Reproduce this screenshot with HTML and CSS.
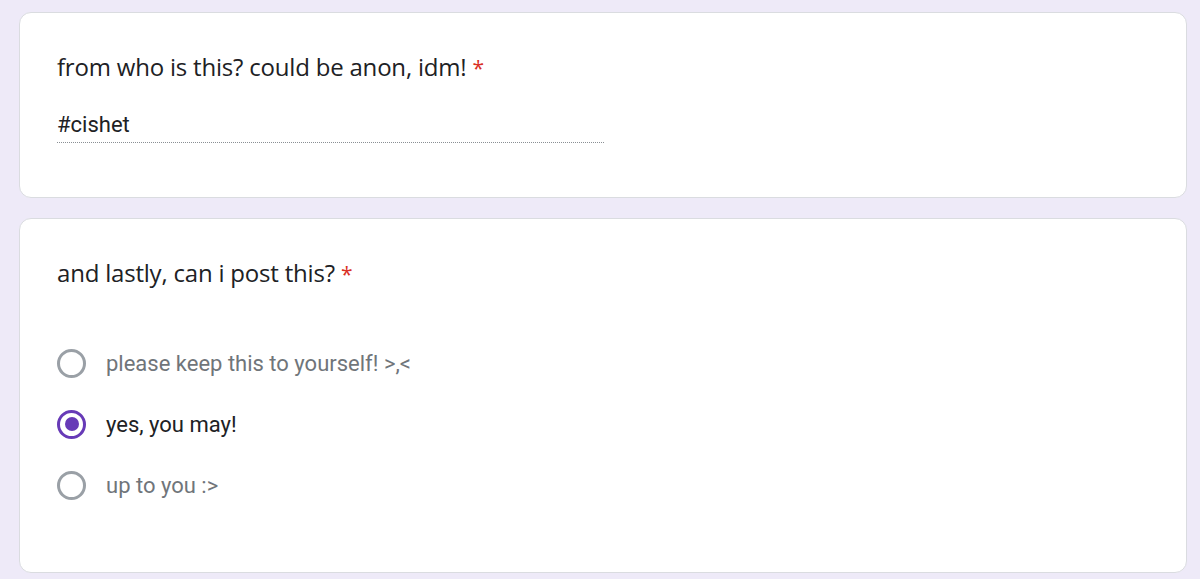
FILE: index.html
```html
<!DOCTYPE html>
<html>
<head>
<meta charset="utf-8">
<link rel="stylesheet" href="styles.css">
</head>
<body>
<div class="page">
  <div class="card card-text">
    <div class="question">from who is this? could be anon, idm! <span class="req">*</span></div>
    <div class="answer">#cishet</div>
  </div>
  <div class="card card-radio">
    <div class="question">and lastly, can i post this? <span class="req">*</span></div>
    <div class="options">
      <div class="option"><span class="radio"></span><span class="label">please keep this to yourself! &gt;,&lt;</span></div>
      <div class="option selected"><span class="radio"></span><span class="label">yes, you may!</span></div>
      <div class="option"><span class="radio"></span><span class="label">up to you :&gt;</span></div>
    </div>
  </div>
</div>
</body>
</html>
```
FILE: styles.css
```css
html, body {
  margin: 0;
  padding: 0;
  background: #eeeaf8;
  height: 100%;
  overflow: hidden;
}
.page {
  padding: 12px 13px 0 19px;
  display: flex;
  flex-direction: column;
  gap: 20px;
}
.card {
  background: #fff;
  border: 1px solid #dadce0;
  border-radius: 12px;
  padding: 0 37px;
  box-sizing: border-box;
}
.card-text {
  height: 186px;
  padding-top: 38px;
}
.card-radio {
  height: 355px;
  padding-top: 38px;
}
.question {
  font-family: "Open Sans", "Noto Sans", sans-serif;
  font-size: 24px;
  line-height: 32px;
  color: #202124;
  letter-spacing: -0.2px;
}
.req {
  color: #d93025;
  font-size: 21px;
}
.answer {
  margin-top: 26px;
  width: 547px;
  font-family: Roboto, sans-serif;
  font-size: 22px;
  line-height: 30px;
  color: #202124;
  padding-bottom: 2px;
  border-bottom: 1px dotted #8a8f94;
}
.options {
  margin-top: 58px;
  display: flex;
  flex-direction: column;
  gap: 31px;
}
.option {
  display: flex;
  align-items: center;
  gap: 20px;
  height: 30px;
}
.radio {
  width: 29px;
  height: 29px;
  box-sizing: border-box;
  border: 3px solid #9aa0a6;
  border-radius: 50%;
  display: flex;
  align-items: center;
  justify-content: center;
}
.selected .radio {
  border-color: #673ab7;
}
.selected .radio::after {
  content: "";
  width: 14px;
  height: 14px;
  border-radius: 50%;
  background: #673ab7;
}
.label {
  font-family: Roboto, sans-serif;
  font-size: 22px;
  color: #70757a;
}
.selected .label {
  color: #202124;
}
```
